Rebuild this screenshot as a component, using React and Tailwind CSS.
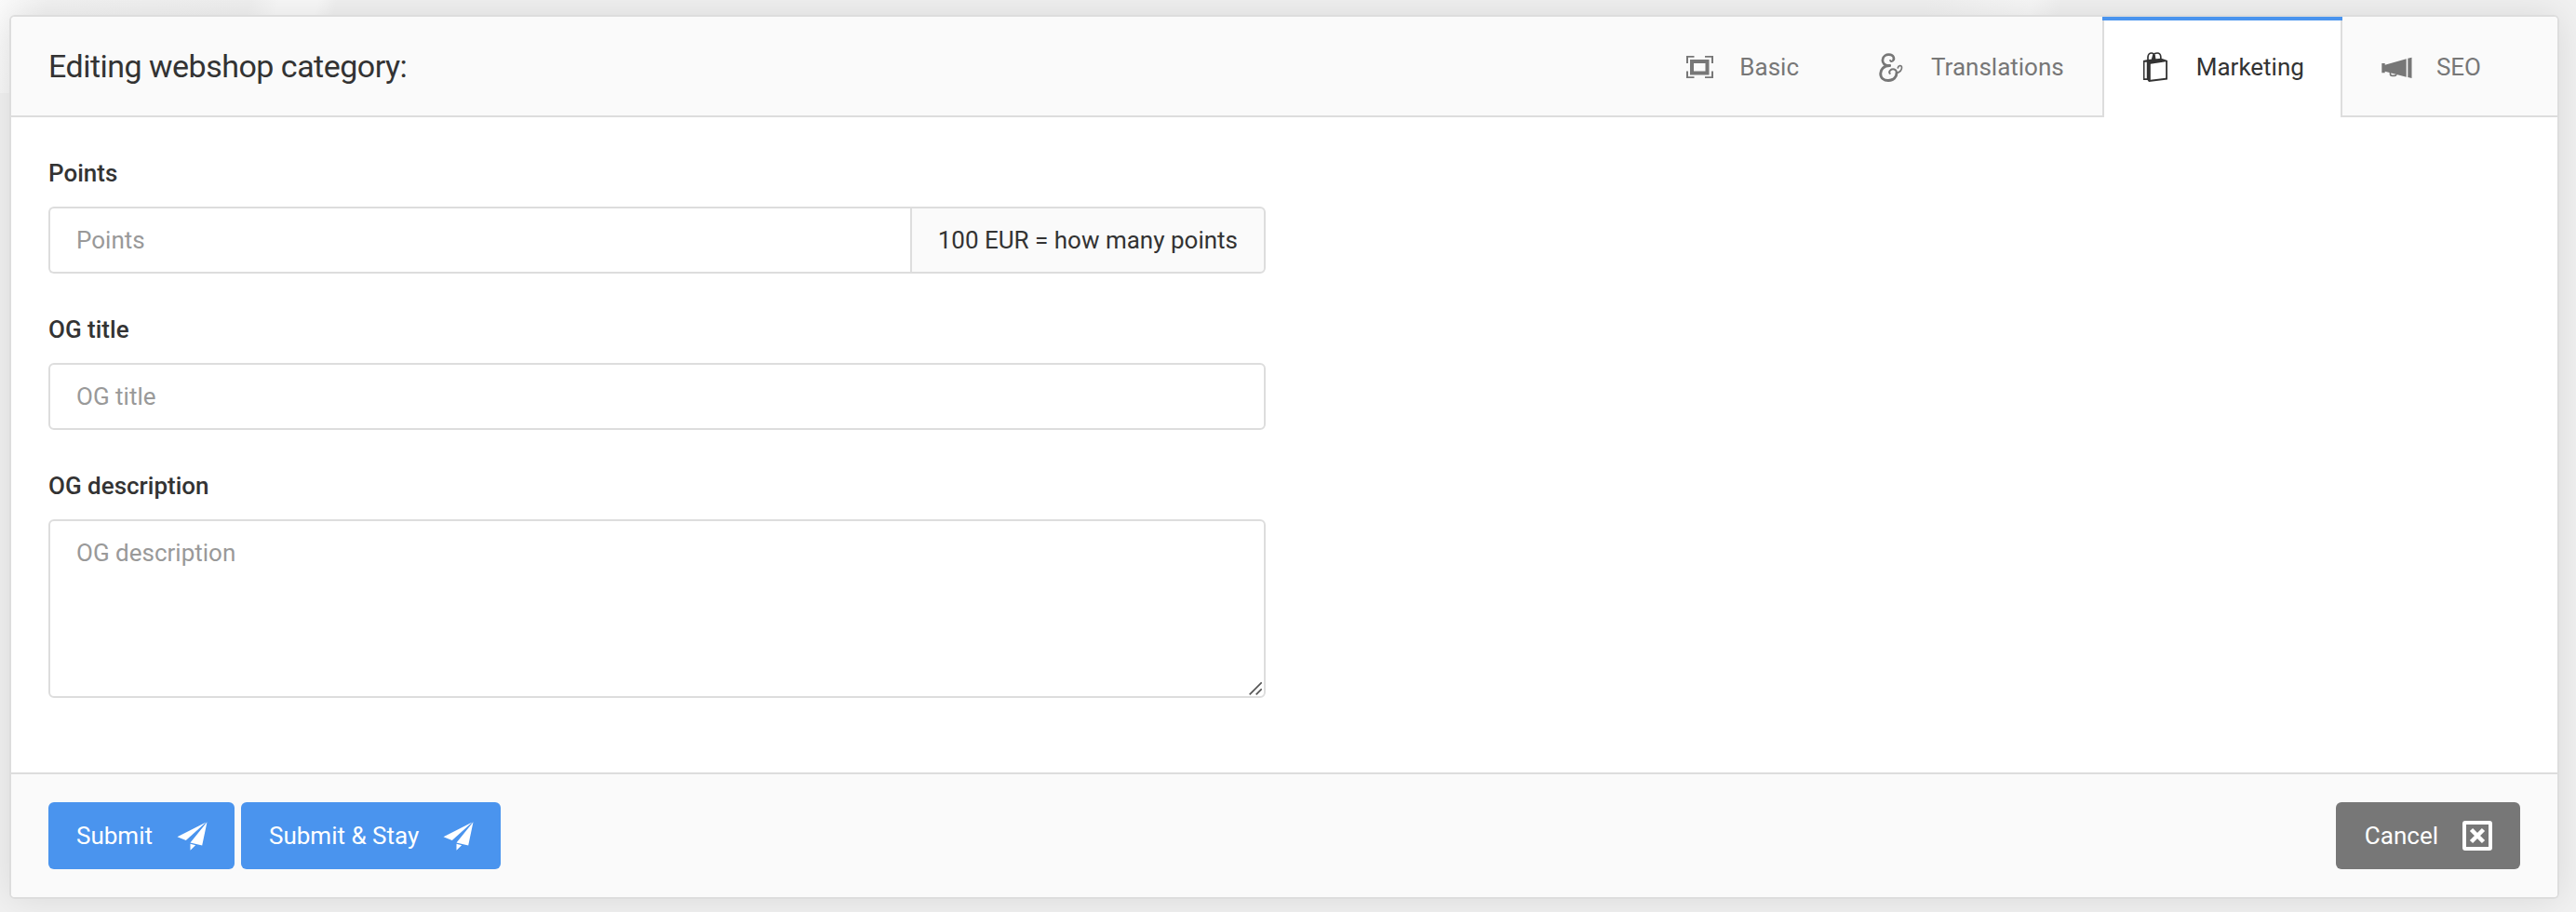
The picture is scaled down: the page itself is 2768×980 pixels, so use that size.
import React from "react";

const fields = "w-full border-2 border-[#ddd] bg-white px-7 text-[26px] leading-10 text-[#333] outline-none placeholder:text-[#999] placeholder:opacity-100";

function BasicIcon() {
  return (
    <svg viewBox="0 0 32 32" className="h-8 w-8" fill="currentColor">
      <path fillRule="evenodd" d="M6 8h20.500v16.500H6zM10 12v8.500h12.500V12z" />
      <path d="M2 4h8.500v1.700H4V12H2zM22 4h9v8h-2V5.700h-7zM2 20.500h2v5.800h6.500V28H2zM29 20.500h2V28h-9v-1.700h7z" />
    </svg>
  );
}

function AmpersandIcon() {
  return (
    <svg viewBox="0 0 32 32" className="h-8 w-8 overflow-visible" fill="none" stroke="currentColor" strokeLinecap="round">
      <path strokeWidth="2.7" d="M14.500 14.500C9 15.500 6.500 11 7 8C7.500 4 11 2.600 13.500 2.600C17.500 2.600 19.500 5 18.800 8" />
      <path strokeWidth="2" d="M18.800 7.800C18.300 10.300 16 10.500 15.200 9" />
      <path strokeWidth="2.9" d="M14.500 14.500C8 14.500 4.700 19 4.700 23C4.700 28 8.500 30.500 13 30.500C18.500 30.500 22 27 22 22.500" />
      <path strokeWidth="2" d="M22 22.500C22 18 17.500 17.500 15.500 19.300C14 20.500 14 22 14.700 23" />
      <path strokeWidth="1.7" d="M22 22.200C25.500 22 28 19 27.500 16C27 13.800 23.800 14 23.300 17" />
    </svg>
  );
}

function BagIcon() {
  return (
    <svg viewBox="0 0 32 32" className="h-8 w-8" fill="none" stroke="currentColor">
      <path
        fill="currentColor"
        fillRule="evenodd"
        stroke="none"
        d="M2 9L7 8L21.500 6.700L28 9V29.500L8 32L6.500 30H2zM3.500 10.700V28.300H5.800V10.700zM9.800 12.800V29.700L26.200 27.800V10.300z"
      />
      <path strokeWidth="1.7" d="M7 9.500V5Q7.500 1 11 1Q13 1 13.800 3.500M11.500 8.500L13 3Q14 1 17 1Q20.500 1 20.800 5V8" />
      <path fill="currentColor" stroke="none" d="M12 8.500L12.800 3h2l.8 5.500z" />
    </svg>
  );
}

function MegaphoneIcon() {
  return (
    <svg viewBox="0 0 32 32" className="h-8 w-8 overflow-visible" fill="currentColor">
      <path d="M.3 12h3.400v1.700L26.700 7.300v19.400L3.700 20.700v1.500H.3zM28.300 6.700l4.200-.9V28l-4.200-1z" />
      <path fill="none" stroke="currentColor" strokeWidth="1.7" d="M9.500 21.500v2q0 1.800 1.800 1.800h2.700q1.800 0 1.800-1.500" />
    </svg>
  );
}

function PlaneIcon() {
  return (
    <svg viewBox="0 0 32 32" className="h-8 w-8 overflow-visible" fill="currentColor">
      <path d="M31.500 1.500L.5 17.300l9.300 3.700zM32.500 1.300L14.500 23.500l12.700 3zM14.500 24.700l5.600 1.500-5.600 5.600z" />
    </svg>
  );
}

function CancelIcon() {
  return (
    <svg viewBox="0 0 32 32" className="h-8 w-8" fill="none" stroke="currentColor">
      <rect x="2" y="2" width="28" height="28" rx="1" strokeWidth="4" />
      <path strokeWidth="4.500" d="M9.500 9.500l13 13M22.500 9.500l-13 13" />
    </svg>
  );
}

const tabs = [
  { label: "Basic", icon: BasicIcon },
  { label: "Translations", icon: AmpersandIcon },
  { label: "Marketing", icon: BagIcon, active: true },
  { label: "SEO", icon: MegaphoneIcon },
];

function Tab({ label, icon: Icon, active }) {
  return (
    <button
      className={
        active
          ? "relative -mb-0.5 flex items-center gap-[27px] border-x-2 border-[#ddd] bg-white pr-[39px] pl-10 text-[#333]"
          : "flex items-center gap-[27px] border-x-2 border-transparent pt-0.5 pr-[39px] pl-10 text-[#777]"
      }
    >
      {active && <span className="absolute -inset-x-0.5 top-0 h-1 bg-[#4a94ee]" />}
      <Icon />
      <span>{label}</span>
    </button>
  );
}

function Field({ label, children }) {
  return (
    <div className="mb-10">
      <label className="mb-4 block leading-10 font-medium">{label}</label>
      {children}
    </div>
  );
}

function Button({ label, icon: Icon, className }) {
  return (
    <button className={`flex h-[72px] items-center gap-[26px] rounded-md pr-[30px] text-white ${className}`}>
      <span>{label}</span>
      <Icon />
    </button>
  );
}

export default function App() {
  return (
    <div className="h-[980px] w-[2768px] overflow-hidden bg-[#f1f1f1] bg-[linear-gradient(105deg,#fbfbfb_0px,#f3f3f3_50px,#f1f1f1_260px,#f9f9f9_290px,#f9f9f9_330px,#f1f1f1_350px,#f1f1f1_2000px,#f8f8f8_2110px,#f1f1f1_2140px)] bg-[length:2768px_100px] bg-no-repeat pt-4 pl-2.5 font-[Roboto,sans-serif] text-[26px] leading-10 text-[#333]">
      <div className="flex h-[950px] w-[2740px] flex-col overflow-hidden rounded-md border-2 border-[#ddd] bg-white shadow-[0_0_40px_rgba(0,0,0,0.1)]">
        {/* Header */}
        <div className="flex h-[108px] shrink-0 justify-between border-b-2 border-[#ddd] bg-[#fafafa] pr-[41px] pl-10">
          <h1 className="self-center text-[34px] tracking-[-0.015em]">Editing webshop category:</h1>
          <div className="flex">
            {tabs.map((tab) => (
              <Tab key={tab.label} {...tab} />
            ))}
          </div>
        </div>

        {/* Form */}
        <div className="w-[1388px] flex-1 px-10 pt-10">
          <Field label="Points">
            <div className="flex">
              <input className={`${fields} h-[72px] min-w-0 flex-1 rounded-l-md border-r-0`} placeholder="Points" />
              <span className="flex h-[72px] items-center rounded-r-md border-2 border-[#ddd] bg-[#fafafa] px-7">
                100 EUR = how many points
              </span>
            </div>
          </Field>
          <Field label="OG title">
            <input className={`${fields} block h-[72px] rounded-md`} placeholder="OG title" />
          </Field>
          <Field label="OG description">
            <div className="relative">
              <textarea className={`${fields} block h-48 resize-none rounded-md py-3.5`} placeholder="OG description" />
              <svg viewBox="0 0 16 16" className="absolute right-1 bottom-[3px] h-4 w-4" stroke="#555" strokeWidth="1.700">
                <path d="M2.700 15.300l13-13M9.700 15.300l6-6" />
              </svg>
            </div>
          </Field>
        </div>

        {/* Actions */}
        <div className="flex h-[134px] shrink-0 items-center justify-between border-t-2 border-[#ddd] bg-[#fafafa] px-10">
          <div className="flex gap-[7px]">
            <Button label="Submit" icon={PlaneIcon} className="bg-[#4a94ee] pl-[30px]" />
            <Button label="Submit & Stay" icon={PlaneIcon} className="bg-[#4a94ee] pl-[30px]" />
          </div>
          <Button label="Cancel" icon={CancelIcon} className="bg-[#777] pl-[31px]" />
        </div>
      </div>
    </div>
  );
}
